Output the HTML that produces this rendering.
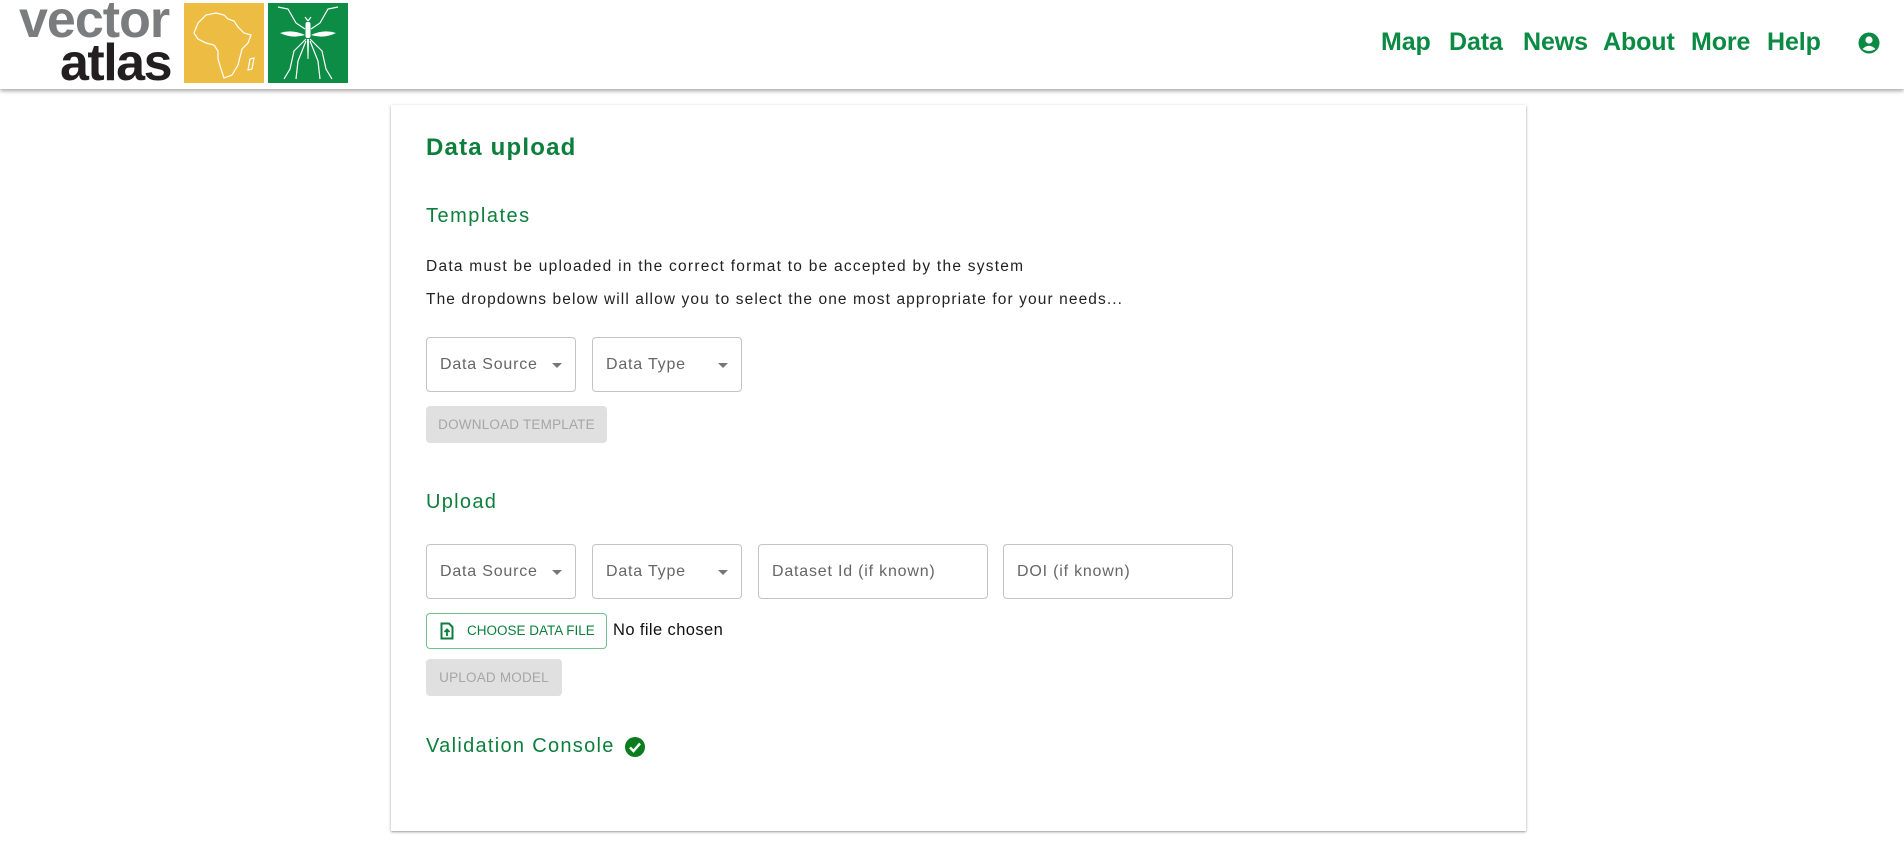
<!DOCTYPE html>
<html><head><meta charset="utf-8">
<style>
*{box-sizing:border-box;margin:0;padding:0}
body{width:1904px;height:846px;background:#fff;font-family:"Liberation Sans",sans-serif;position:relative;overflow:hidden}
.hdr{position:absolute;left:0;top:0;width:1904px;height:89px;background:#fff;box-shadow:0 2px 4px rgba(0,0,0,.35);z-index:2}
.abs{position:absolute}
.nav{position:absolute;top:28px;font-size:25px;color:#0a8a43;font-weight:bold;letter-spacing:-0.1px}
.card{position:absolute;left:391px;top:105px;width:1135px;height:726px;background:#fff;box-shadow:0 1px 3px rgba(0,0,0,.3),0 1px 1px rgba(0,0,0,.14)}
.g{color:#0d7f3c}
.sel{position:absolute;height:55px;border:1px solid #c4c4c4;border-radius:4px;font-size:16px;color:#666;padding-left:13px;line-height:53px;letter-spacing:0.8px}
.arr{position:absolute;right:13px;top:25px;width:0;height:0;border-left:5px solid transparent;border-right:5px solid transparent;border-top:5px solid #777}
.btn{position:absolute;background:#e0e0e0;border-radius:4px;color:#a6a6a6;font-size:13.5px;text-align:center;letter-spacing:0.2px}
</style></head><body>
<div class="hdr">
  <div class="abs" style="left:19px;top:-10px;font-size:52px;font-weight:bold;color:#7b7c7e;letter-spacing:-1px">vector</div>
  <div class="abs" style="left:60px;top:33px;font-size:52px;font-weight:bold;color:#231f20;letter-spacing:-1.5px">atlas</div>
  <svg class="abs" style="left:184px;top:3px" width="80" height="80" viewBox="0 0 80 80">
    <rect width="80" height="80" fill="#ecbc43"/>
    <path d="M14 20 L22 12 L32 10 L40 12 L44 16 L50 18 L54 24 L60 30 L67 32 L64 40 L58 46 L56 54 L54 62 L48 72 L40 75 L37 66 L34 56 L34 48 L30 42 L22 40 L14 36 L10 30 Z" fill="none" stroke="#fff" stroke-width="1.2"/>
    <path d="M66 56 L70 55 L68 66 L64 67 Z" fill="none" stroke="#fff" stroke-width="1.2"/>
  </svg>
  <svg class="abs" style="left:268px;top:3px" width="80" height="80" viewBox="0 0 80 80">
    <rect width="80" height="80" fill="#0c8c45"/>
    <g stroke="#fff" stroke-width="1.2" fill="none">
      <path d="M40 18 L37 14 M40 18 L43 14"/>
      <path d="M37 26 L28 20 L20 6 L10 4 M43 26 L52 20 L60 6 L70 4"/>
      <path d="M38 36 L26 48 L22 66 L16 76 M42 36 L54 48 L58 66 L64 76"/>
      <path d="M38 38 L30 58 L28 76 M42 38 L50 58 L52 76"/>
    </g>
    <path d="M12 30 Q24 26 37 32 Q24 36 12 30Z M68 30 Q56 26 43 32 Q56 36 68 30Z" fill="#fff"/>
    <rect x="37.5" y="19" width="5" height="16" rx="2" fill="#fff"/>
    <path d="M39 36 L41 36 L40.5 56 L39.5 56Z" fill="#fff"/>
  </svg>
  <div class="nav" style="left:1381px">Map</div>
  <div class="nav" style="left:1449px">Data</div>
  <div class="nav" style="left:1523px">News</div>
  <div class="nav" style="left:1603px">About</div>
  <div class="nav" style="left:1691px">More</div>
  <div class="nav" style="left:1767px">Help</div>
  <svg class="abs" style="left:1858px;top:32px" width="22" height="22" viewBox="0 0 22 22">
    <circle cx="11" cy="11" r="10.5" fill="#0a8a43"/>
    <circle cx="11" cy="8" r="3.6" fill="#fff"/>
    <path d="M4.5 17 Q11 10.5 17.5 17 Q11 21 4.5 17Z" fill="#fff"/>
  </svg>
</div>

<div class="card"></div>
<div class="abs g" style="left:426px;top:134px;font-size:24px;font-weight:600;letter-spacing:1.2px">Data upload</div>
<div class="abs g" style="left:426px;top:205px;font-size:20px;letter-spacing:1.5px">Templates</div>
<div class="abs" style="left:426px;top:258px;font-size:15.5px;color:#222;letter-spacing:1.25px">Data must be uploaded in the correct format to be accepted by the system</div>
<div class="abs" style="left:426px;top:291px;font-size:15.5px;color:#222;letter-spacing:1.1px">The dropdowns below will allow you to select the one most appropriate for your needs...</div>

<div class="sel" style="left:426px;top:337px;width:150px">Data Source<span class="arr"></span></div>
<div class="sel" style="left:592px;top:337px;width:150px">Data Type<span class="arr"></span></div>
<div class="btn" style="left:426px;top:406px;width:181px;height:37px;line-height:37px">DOWNLOAD TEMPLATE</div>

<div class="abs g" style="left:426px;top:491px;font-size:20px;letter-spacing:1.3px">Upload</div>
<div class="sel" style="left:426px;top:544px;width:150px">Data Source<span class="arr"></span></div>
<div class="sel" style="left:592px;top:544px;width:150px">Data Type<span class="arr"></span></div>
<div class="sel" style="left:758px;top:544px;width:230px">Dataset Id (if known)</div>
<div class="sel" style="left:1003px;top:544px;width:230px">DOI (if known)</div>

<div class="abs" style="left:426px;top:613px;width:181px;height:36px;border:1px solid #72bf8f;border-radius:4px;color:#0d7f3c;font-size:13.5px;line-height:34px;padding-left:40px">CHOOSE DATA FILE</div>
<svg class="abs" style="left:440px;top:622px" width="14" height="18" viewBox="0 0 14 18">
  <path d="M1.5 1.5 H9 L12.5 5 V16.5 H1.5 Z" fill="none" stroke="#0d7f3c" stroke-width="2"/>
  <path d="M7 14 V8 M4.5 10 L7 7.5 L9.5 10" fill="none" stroke="#0d7f3c" stroke-width="1.8"/>
</svg>
<div class="abs" style="left:613px;top:621px;font-size:16.5px;color:#111;letter-spacing:0.4px">No file chosen</div>
<div class="btn" style="left:426px;top:659px;width:136px;height:37px;line-height:37px">UPLOAD MODEL</div>

<div class="abs g" style="left:426px;top:735px;font-size:20px;letter-spacing:1.3px">Validation Console</div>
<svg class="abs" style="left:625px;top:737px" width="20" height="20" viewBox="0 0 20 20">
  <circle cx="10" cy="10" r="10" fill="#0b7d1e"/>
  <path d="M5 10.5 L8.5 14 L15 6.5" fill="none" stroke="#fff" stroke-width="2.5"/>
</svg>
</body></html>
